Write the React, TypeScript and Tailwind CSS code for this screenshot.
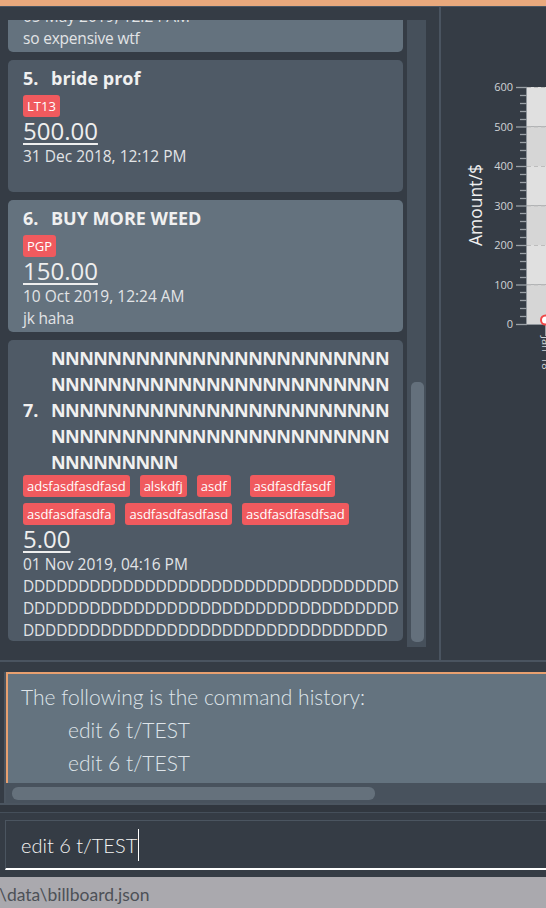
import React from "react";

type CardProps = {
  idx: number;
  nameLines: string[];
  tags: { t: string; extra?: boolean }[];
  amount: string;
  date: string;
  desc: string[];
  light: boolean;
};

function Tag({ t, extra }: { t: string; extra?: boolean }) {
  return (
    <span
      className={`bg-[#f05a5e] text-white text-[13px] leading-[18px] px-[4px] py-[2px] rounded-[3px] ${extra ? "ml-[9px]" : ""}`}
    >
      {t}
    </span>
  );
}

function Card({ idx, nameLines, tags, amount, date, desc, light }: CardProps) {
  const multi = nameLines.length > 1;
  return (
    <div
      className={`${light ? "bg-[#64727e]" : "bg-[#4f5a66]"} rounded-[5px] pl-[15px] pr-[4px] pt-[5px] ${multi ? "pb-0" : "pb-[3px]"} shrink-0 font-['Open_Sans',sans-serif]`}
    >
      <div className="flex items-center font-bold text-[18px] leading-[26px] text-[#f0f0f0]">
        <span className="w-[28px] shrink-0">{idx}.</span>
        <div className={`flex flex-col whitespace-nowrap ${multi ? "tracking-[-0.55px]" : ""}`}>
          {nameLines.map((l, i) => (
            <span key={i}>{l}</span>
          ))}
        </div>
      </div>
      <div className={`flex flex-wrap gap-x-[10px] gap-y-[6px] ${multi ? "mt-0" : "mt-[4px]"}`}>
        {tags.map((tg, i) => (
          <Tag key={i} t={tg.t} extra={tg.extra} />
        ))}
      </div>
      <div className="text-[24px] leading-[28px] text-[#eeeeee]">
        <span className="underline decoration-[1.5px] underline-offset-[3px]">{amount}</span>
      </div>
      <div className="text-[15.5px] leading-[22px] text-[#e2e4e6]">{date}</div>
      {desc.length === 0 ? (
        <div className="h-[22px]" />
      ) : (
        desc.map((d, i) => (
          <div key={i} className="text-[15.5px] leading-[22px] text-[#e2e4e6] whitespace-nowrap tracking-[-0.2px]">
            {d}
          </div>
        ))
      )}
    </div>
  );
}

function Chart() {
  const top = 80;
  const per = 39.5;
  const majors = [600, 500, 400, 300, 200, 100, 0];
  const minors: number[] = [];
  for (let i = 0; i < 6; i++) {
    for (let j = 1; j < 5; j++) minors.push(top + i * per + (j * per) / 5);
  }
  return (
    <svg width="105" height="653" className="block">
      {majors.slice(0, 6).map((m, i) => (
        <rect
          key={"b" + m}
          x="86"
          y={top + i * per}
          width="20"
          height={per}
          fill={i % 2 === 0 ? "#e0e0e0" : "#d6d6d6"}
        />
      ))}
      {majors.map((m, i) => (
        <line
          key={"g" + m}
          x1="86"
          x2="106"
          y1={top + i * per + 0.5}
          y2={top + i * per + 0.5}
          stroke="#bdbdbd"
          strokeDasharray="4 3"
        />
      ))}
      <line x1="85.5" x2="85.5" y1={top} y2={top + 6 * per} stroke="#8f959b" />
      <line x1="86" x2="106" y1={top + 6 * per + 0.5} y2={top + 6 * per + 0.5} stroke="#8f959b" />
      {majors.map((m, i) => (
        <g key={"t" + m}>
          <line x1="75" x2="86" y1={top + i * per + 0.5} y2={top + i * per + 0.5} stroke="#9aa0a6" strokeWidth="1.3" />
          <text
            x="72"
            y={top + i * per + 4}
            textAnchor="end"
            fontSize="11"
            fill="#cfd3d6"
            fontFamily="Open Sans, sans-serif"
          >
            {m}
          </text>
        </g>
      ))}
      {minors.map((y, i) => (
        <line key={"m" + i} x1="79" x2="86" y1={Math.round(y) + 0.5} y2={Math.round(y) + 0.5} stroke="#9aa0a6" strokeWidth="1.3" />
      ))}
      <text
        x="0"
        y="0"
        transform="translate(41 198) rotate(-90)"
        textAnchor="middle"
        fontSize="17.5"
        fill="#f0f0f0"
        fontFamily="Open Sans, sans-serif"
      >
        Amount/$
      </text>
      <rect x="104.5" y="317" width="2" height="12" fill="#ffffff" />
      <circle cx="104.5" cy="313" r="4.5" fill="#ffffff" stroke="#f04848" strokeWidth="2" />
      <text
        x="0"
        y="0"
        transform="translate(101 329) rotate(90)"
        fontSize="11"
        fill="#cfd3d6"
        fontFamily="Open Sans, sans-serif"
      >
        Jan '18
      </text>
    </svg>
  );
}

export default function App() {
  const N24 = "N".repeat(24);
  const D34 = "D".repeat(34);
  const cards: CardProps[] = [
    {
      idx: 4,
      nameLines: ["iPhone XS Max"],
      tags: [{ t: "phone" }],
      amount: "1999.00",
      date: "05 May 2019, 12:24 AM",
      desc: ["so expensive wtf"],
      light: true,
    },
    {
      idx: 5,
      nameLines: ["bride prof"],
      tags: [{ t: "LT13" }],
      amount: "500.00",
      date: "31 Dec 2018, 12:12 PM",
      desc: [],
      light: false,
    },
    {
      idx: 6,
      nameLines: ["BUY MORE WEED"],
      tags: [{ t: "PGP" }],
      amount: "150.00",
      date: "10 Oct 2019, 12:24 AM",
      desc: ["jk haha"],
      light: true,
    },
    {
      idx: 7,
      nameLines: [N24, N24, N24, N24, "N".repeat(9)],
      tags: [
        { t: "adsfasdfasdfasd" },
        { t: "alskdfj" },
        { t: "asdf" },
        { t: "asdfasdfasdf", extra: true },
        { t: "asdfasdfasdfa" },
        { t: "asdfasdfasdfasd" },
        { t: "asdfasdfasdfsad" },
      ],
      amount: "5.00",
      date: "01 Nov 2019, 04:16 PM",
      desc: [D34, D34, "D".repeat(33)],
      light: false,
    },
  ];

  return (
    <div className="w-[546px] h-[908px] bg-[#353c45] overflow-hidden flex flex-col">
      <div className="h-[6px] bg-[#e9a97d] shrink-0" />
      <div className="h-px bg-[#4b5663] shrink-0" />
      <div className="flex h-[653px] shrink-0">
        <div className="w-[439px] shrink-0 flex pl-[8px] pt-[13px] pb-[6px]">
          <div className="w-[395px] h-[627px] overflow-hidden">
            <div className="flex flex-col gap-[8px] mt-[-100px]">
              {cards.map((c) => (
                <Card key={c.idx} {...c} />
              ))}
            </div>
          </div>
          <div className="ml-[4px] w-[19px] h-[627px] bg-[#46505b] relative">
            <div className="absolute left-[4px] top-[362px] w-[13px] h-[260px] rounded-[5px] bg-[#64707c]" />
          </div>
        </div>
        <div className="w-[2px] bg-[#4a5460] shrink-0" />
        <div className="flex-1 overflow-hidden">
          <Chart />
        </div>
      </div>
      <div className="h-[2px] bg-[#4a5460] shrink-0" />
      <div className="h-[10px] shrink-0" />
      <div className="ml-[4px] border-l-2 border-[#4b5560] flex flex-col shrink-0">
        <div className="h-[111px] border-t-2 border-l-2 border-[#e8a070] bg-[#64737f] pl-[13px] pt-[6px] font-['Lato',sans-serif] font-light text-[21px] leading-[33px] text-[#dfe5ea] whitespace-nowrap">
          <div>The following is the command history:</div>
          <div className="pl-[47px]">edit 6 t/TEST</div>
          <div className="pl-[47px]">edit 6 t/TEST</div>
        </div>
        <div className="h-[20px] bg-[#48525d] pt-[4px]">
          <div className="ml-[6px] w-[363px] h-[13px] rounded-[6px] bg-[#65717c]" />
        </div>
      </div>
      <div className="h-[2px] bg-[#4b5560] shrink-0" />
      <div className="h-[7px] bg-[#31373f] shrink-0" />
      <div className="h-px bg-[#454f5a] shrink-0" />
      <div className="h-[7px] shrink-0" />
      <div className="ml-[5px] h-[50px] border-l border-t border-[#4b5560] border-b-2 border-b-white flex items-center pl-[15px] shrink-0 font-['Lato',sans-serif] font-light text-[20px] text-[#f4f4f4]">
        <span>edit 6 t/TEST</span>
        <span className="inline-block w-px h-[32px] bg-white ml-[1px]" />
      </div>
      <div className="h-[7px] shrink-0" />
      <div className="h-[31px] bg-[#aaa9ae] shrink-0 flex items-center pt-[6px] overflow-hidden">
        <span className="ml-[-1px] font-['Lato',sans-serif] text-[17.5px] text-[#4d5157] whitespace-nowrap">
          \data\billboard.json
        </span>
      </div>
    </div>
  );
}
